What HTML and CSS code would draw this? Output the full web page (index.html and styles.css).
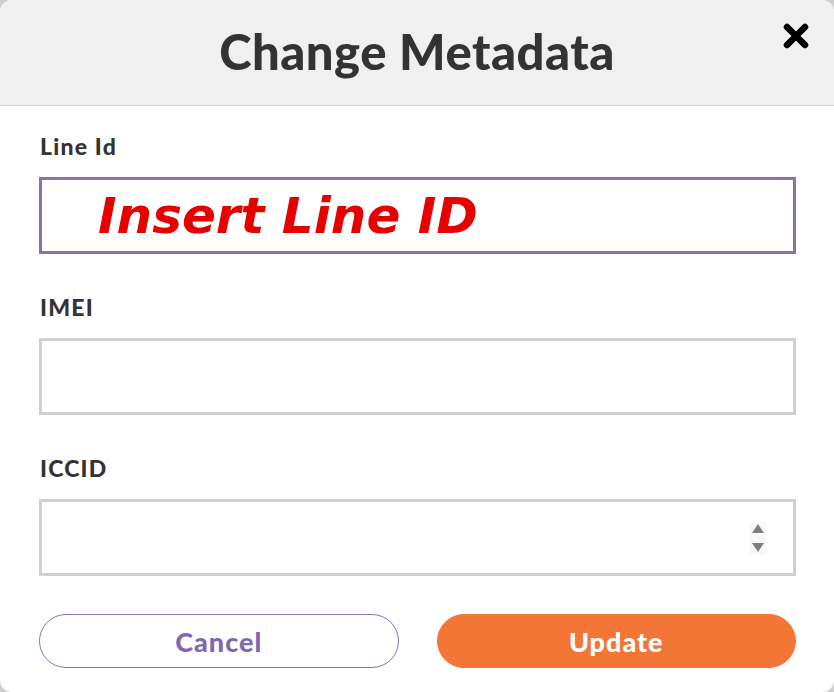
FILE: index.html
```html
<!DOCTYPE html>
<html>
<head>
<meta charset="utf-8">
<link rel="stylesheet" href="styles.css">
</head>
<body>
<div class="dialog">
  <div class="header">
    <h1 class="title">Change Metadata</h1>
    <button class="close" aria-label="Close">
      <svg width="28" height="26" viewBox="0 0 28 26"><path d="M5 4 L23 22 M23 4 L5 22" stroke="#000" stroke-width="6.5" stroke-linecap="round"/></svg>
    </button>
  </div>
  <div class="body">
    <label class="label first">Line Id</label>
    <div class="field active"><span class="hint">Insert Line ID</span></div>
    <label class="label">IMEI</label>
    <div class="field"></div>
    <label class="label">ICCID</label>
    <div class="field spin-field">
      <span class="spinner">
        <svg width="14" height="30" viewBox="0 0 14 30"><path d="M7 1 L13 10 L1 10 Z" fill="#7f7f7f"/><path d="M1 20 L13 20 L7 29 Z" fill="#7f7f7f"/></svg>
      </span>
    </div>
    <div class="actions">
      <button class="btn cancel">Cancel</button>
      <button class="btn update">Update</button>
    </div>
  </div>
</div>
</body>
</html>
```
FILE: styles.css
```css
* { box-sizing: border-box; }
html, body { margin: 0; padding: 0; }
body {
  width: 834px;
  height: 692px;
  background: #cfcfcf;
  font-family: Lato, "Open Sans", sans-serif;
  overflow: hidden;
}
.dialog {
  width: 834px;
  height: 692px;
  background: #fff;
  border-radius: 12px;
  overflow: hidden;
  display: flex;
  flex-direction: column;
}
.header {
  position: relative;
  height: 106px;
  background: #f0f0f0;
  border-bottom: 1px solid #d3d3d3;
  display: flex;
  align-items: center;
  justify-content: center;
}
.title {
  margin: 0 0 2px 0;
  font-size: 49px;
  font-weight: 900;
  color: #333;
  line-height: 1;
  letter-spacing: 0.5px;
}
.close {
  position: absolute;
  right: 24px;
  top: 23px;
  border: 0;
  background: none;
  padding: 0;
  width: 28px;
  height: 26px;
  display: flex;
}
.body {
  padding: 0 38px 0 39px;
  display: flex;
  flex-direction: column;
}
.label {
  display: block;
  font-size: 23px;
  line-height: 28px;
  font-weight: 900;
  color: #333;
  letter-spacing: 1.2px;
  margin: 39px 0 17px 1px;
}
.label.first { margin-top: 26px; }
.field {
  height: 77px;
  border: 3px solid #d0d0d0;
  background: #fff;
  display: flex;
  align-items: center;
}
.field.active { border-color: #8870b2; }
.hint {
  font-family: "DejaVu Sans", Verdana, sans-serif;
  font-weight: 700;
  font-style: italic;
  font-size: 50px;
  color: #e60000;
  margin-left: 56px;
  line-height: 1;
}
.spin-field { justify-content: flex-end; }
.spinner {
  display: flex;
  width: 16px;
  height: 32px;
  margin-right: 27px;
  background: #f8f8f8;
  align-items: center;
  justify-content: center;
}
.actions {
  margin-top: 38px;
  display: flex;
  gap: 38px;
}
.btn {
  flex: 1;
  height: 54px;
  border-radius: 27px;
  font-family: Lato, "Open Sans", sans-serif;
  font-size: 27px;
  font-weight: 900;
  letter-spacing: 1px;
  cursor: pointer;
}
.cancel {
  background: #fff;
  border: 1px solid #8870b2;
  color: #7f68b0;
}
.update {
  background: #f47637;
  border: 1px solid #f47637;
  color: #fff;
}
```
